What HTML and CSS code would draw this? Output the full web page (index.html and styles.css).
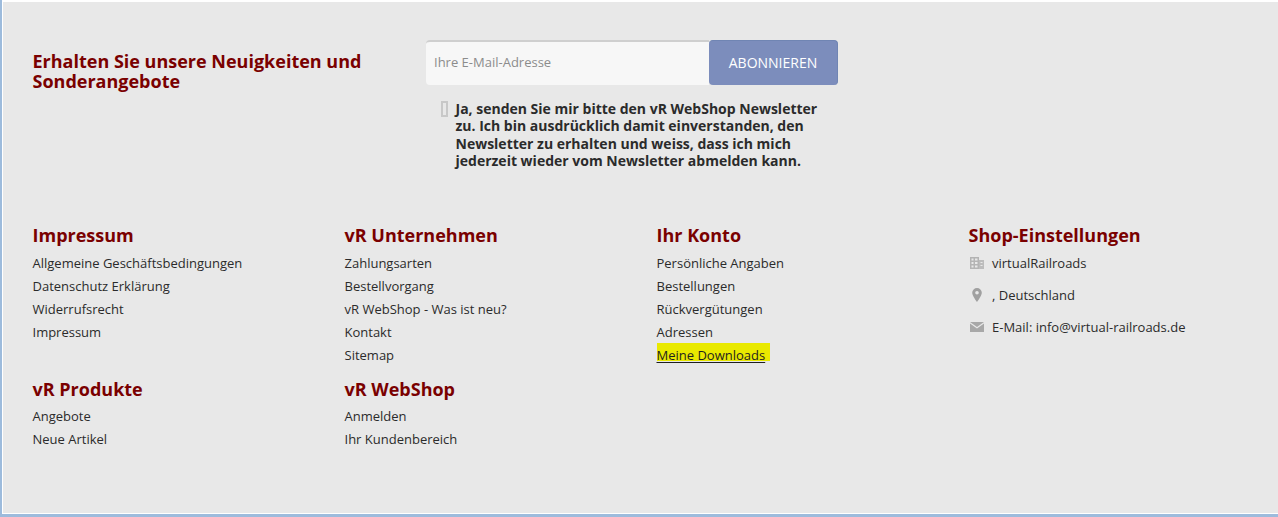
FILE: index.html
```html
<!DOCTYPE html>
<html lang="de">
<head>
<meta charset="utf-8">
<title>Footer</title>
<link rel="stylesheet" href="styles.css">
</head>
<body>
<div class="frame">
  <footer class="footer">
    <section class="newsletter">
      <h2 class="news-title">Erhalten Sie unsere Neuigkeiten und Sonderangebote</h2>
      <form class="news-form">
        <div class="news-row">
          <input class="news-input" type="text" placeholder="Ihre E-Mail-Adresse">
          <button class="news-button" type="button">ABONNIEREN</button>
        </div>
        <label class="consent">
          <span class="check"></span>
          <span class="consent-text">Ja, senden Sie mir bitte den vR WebShop Newsletter zu. Ich bin ausdrücklich damit einverstanden, den Newsletter zu erhalten und weiss, dass ich mich jederzeit wieder vom Newsletter abmelden kann.</span>
        </label>
      </form>
    </section>
    <section class="columns">
      <div class="block">
        <h3 class="col-title">Impressum</h3>
        <ul class="links">
          <li><a href="#">Allgemeine Geschäftsbedingungen</a></li>
          <li><a href="#">Datenschutz Erklärung</a></li>
          <li><a href="#">Widerrufsrecht</a></li>
          <li><a href="#">Impressum</a></li>
        </ul>
      </div>
      <div class="block">
        <h3 class="col-title">vR Unternehmen</h3>
        <ul class="links">
          <li><a href="#">Zahlungsarten</a></li>
          <li><a href="#">Bestellvorgang</a></li>
          <li><a href="#">vR WebShop - Was ist neu?</a></li>
          <li><a href="#">Kontakt</a></li>
          <li><a href="#">Sitemap</a></li>
        </ul>
      </div>
      <div class="block">
        <h3 class="col-title">Ihr Konto</h3>
        <ul class="links">
          <li><a href="#">Persönliche Angaben</a></li>
          <li><a href="#">Bestellungen</a></li>
          <li><a href="#">Rückvergütungen</a></li>
          <li><a href="#">Adressen</a></li>
          <li><a class="highlight" href="#">Meine Downloads</a></li>
        </ul>
      </div>
      <div class="block">
        <h3 class="col-title">Shop-Einstellungen</h3>
        <ul class="contact">
          <li>
            <svg class="icon" width="14" height="12" viewBox="0 0 14 12"><path fill="#b4b4b4" fill-rule="evenodd" d="M0 0h9v12H0zM1.500 1.500v2h2v-2zM5 1.500v2h2.500v-2zM1.500 5v2h2V5zM5 5v2h2.500V5zM1.500 8.500v2h2v-2zM5 8.500v2h2.500v-2z"/><path fill="#bcbcbc" fill-rule="evenodd" d="M9 3h5v9H9zM10.500 5v1h2V5zM10.500 8v1h2V8z"/></svg>
            <span>virtualRailroads</span>
          </li>
          <li>
            <svg class="icon" width="14" height="14" viewBox="0 0 14 14"><path fill="#a0a0a0" fill-rule="evenodd" d="M7 0a4.800 4.800 0 0 1 4.800 4.800C11.800 8 7 14 7 14S2.200 8 2.200 4.800A4.800 4.800 0 0 1 7 0zm0 3a1.800 1.800 0 1 0 0 3.600A1.800 1.800 0 0 0 7 3z"/></svg>
            <span>, Deutschland</span>
          </li>
          <li>
            <svg class="icon" width="14" height="10" viewBox="0 0 14 10"><path fill="#a8a8a8" d="M0 0h14L7 5zM0 1.600V10h14V1.600L7 6.600z"/></svg>
            <span>E-Mail: info@virtual-railroads.de</span>
          </li>
        </ul>
      </div>
      <div class="block">
        <h3 class="col-title">vR Produkte</h3>
        <ul class="links">
          <li><a href="#">Angebote</a></li>
          <li><a href="#">Neue Artikel</a></li>
        </ul>
      </div>
      <div class="block">
        <h3 class="col-title">vR WebShop</h3>
        <ul class="links">
          <li><a href="#">Anmelden</a></li>
          <li><a href="#">Ihr Kundenbereich</a></li>
        </ul>
      </div>
    </section>
  </footer>
</div>
</body>
</html>
```
FILE: styles.css
```css
* {
  box-sizing: border-box;
}
html, body {
  margin: 0;
  height: 517px;
  overflow: hidden;
}
body {
  font-family: "Open Sans", sans-serif;
  color: #2b2b2b;
  background: #9dbbdc;
}
.frame {
  height: 514px;
  margin-left: 2px;
  background: #fff;
  padding: 2px 0 1px 1px;
}
.footer {
  height: 100%;
  background: #e8e8e8;
  padding: 38px 0 0 29.500px;
}
.newsletter {
  display: flex;
  height: 183px;
}
.news-title {
  margin: 10.500px 0 0;
  width: 393.500px;
  font-size: 18px;
  line-height: 20.500px;
  font-weight: 700;
  color: #7a0000;
}
.news-row {
  display: flex;
  width: 412px;
  height: 45px;
}
.news-input {
  width: 283px;
  height: 45px;
  border: 0;
  border-top: 2px solid #cfcfcf;
  border-radius: 4px 0 0 4px;
  background: #f7f7f7;
  padding: 0 8px 4px;
  font: 13px "Open Sans", sans-serif;
  outline: none;
}
.news-input::placeholder {
  color: #8c8c8c;
  opacity: 1;
}
.news-button {
  width: 129px;
  height: 45px;
  border: 0;
  border-right: 1px solid #7085b3;
  border-top: 1px solid #7085b3;
  border-radius: 4px;
  background: #7c8dbc;
  color: #fff;
  font: 14px "Open Sans", sans-serif;
  padding: 0 0 2px;
}
.consent {
  display: flex;
  margin: 15px 0 0 15px;
  width: 385px;
}
.check {
  flex: none;
  width: 7px;
  height: 16px;
  margin-top: 1px;
  border: 2px solid #c8c8c8;
}
.consent-text {
  margin-left: 7.500px;
  font-size: 14px;
  line-height: 17.400px;
  font-weight: 700;
  color: #2b2b2b;
}
.columns {
  display: grid;
  grid-template-columns: repeat(4, 312px);
  align-items: start;
  row-gap: 10.100px;
}
.col-title {
  margin: 0;
  font-size: 18px;
  line-height: 25px;
  font-weight: 700;
  color: #7a0000;
}
.links, .contact {
  list-style: none;
  margin: 3.500px 0 0;
  padding: 0;
  font-size: 13px;
  line-height: 23px;
}
.links a {
  color: #2b2b2b;
  text-decoration: none;
}
.links li {
  height: 23px;
}
.links a.highlight {
  background: #e9e900;
  color: #1f1f1f;
  text-decoration: underline;
  text-underline-offset: 2px;
  padding: 1px 5px 0 0;
  display: inline-block;
  height: 18px;
  line-height: 23px;
  vertical-align: top;
  margin-top: -1px;
}
.contact li {
  display: flex;
  align-items: center;
  height: 23px;
  margin-bottom: 9px;
}
.icon {
  flex: none;
  margin: 0 8.500px 0 1px;
}
```
